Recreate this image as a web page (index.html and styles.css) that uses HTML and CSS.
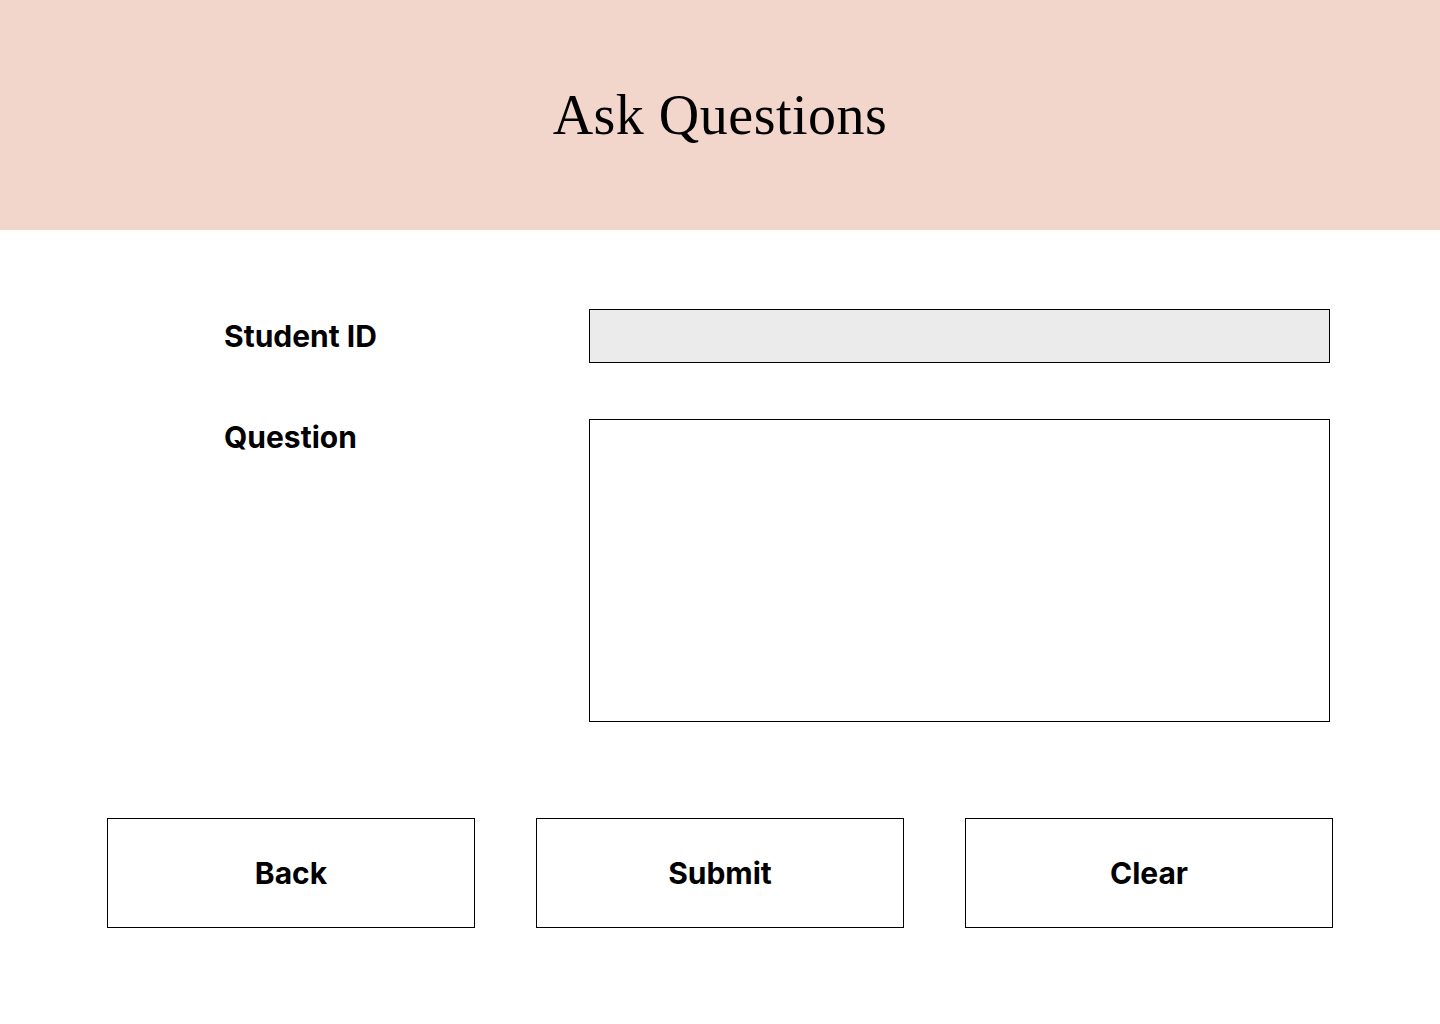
FILE: index.html
```html
<!DOCTYPE html>
<html lang="en">
<head>
<meta charset="utf-8">
<title>Ask Questions</title>
<link rel="stylesheet" href="styles.css">
</head>
<body>
<header class="hero">
  <h1 class="hero-title">Ask Questions</h1>
</header>
<main class="content">
  <form class="form">
    <div class="row row-id">
      <label class="label" for="sid">Student ID</label>
      <input class="input" id="sid" type="text">
    </div>
    <div class="row row-q">
      <label class="label" for="q">Question</label>
      <textarea class="textarea" id="q"></textarea>
    </div>
  </form>
  <div class="actions">
    <button class="btn" type="button">Back</button>
    <button class="btn" type="button">Submit</button>
    <button class="btn" type="button">Clear</button>
  </div>
</main>
</body>
</html>
```

FILE: styles.css
```css
* { box-sizing: border-box; }
html, body { margin: 0; padding: 0; }
body {
  width: 1440px;
  height: 1024px;
  background: #ffffff;
  font-family: Inter, "Liberation Sans", sans-serif;
  color: #000;
  overflow: hidden;
}
.hero {
  height: 230px;
  background: #f2d6cb;
  display: flex;
  align-items: center;
  justify-content: center;
}
.hero-title {
  margin: 0;
  font-family: "Liberation Serif", "Times New Roman", serif;
  font-weight: 400;
  font-size: 56px;
  letter-spacing: 0.5px;
  line-height: 1;
  color: #000;
}
.content {
  padding-top: 79px;
}
.form {
  display: flex;
  flex-direction: column;
  gap: 56px;
  padding-left: 224px;
}
.row {
  display: grid;
  grid-template-columns: 365px 741px;
}
.row-id { align-items: center; }
.row-q { align-items: start; }
.label {
  font-weight: 700;
  font-size: 30px;
  line-height: 36px;
}
.input {
  height: 54px;
  border: 1px solid #000;
  background: #ebebeb;
  border-radius: 0;
  margin: 0;
  padding: 0 12px;
  font: inherit;
}
.textarea {
  height: 303px;
  border: 1px solid #000;
  background: #fff;
  border-radius: 0;
  margin: 0;
  resize: none;
  display: block;
  font: inherit;
}
.actions {
  display: flex;
  gap: 61px;
  padding-left: 107px;
  margin-top: 96px;
}
.btn {
  width: 368px;
  height: 110px;
  border: 1px solid #000;
  background: #fff;
  border-radius: 0;
  font-family: Inter, "Liberation Sans", sans-serif;
  font-weight: 700;
  font-size: 30px;
  color: #000;
  padding: 0;
}
```
